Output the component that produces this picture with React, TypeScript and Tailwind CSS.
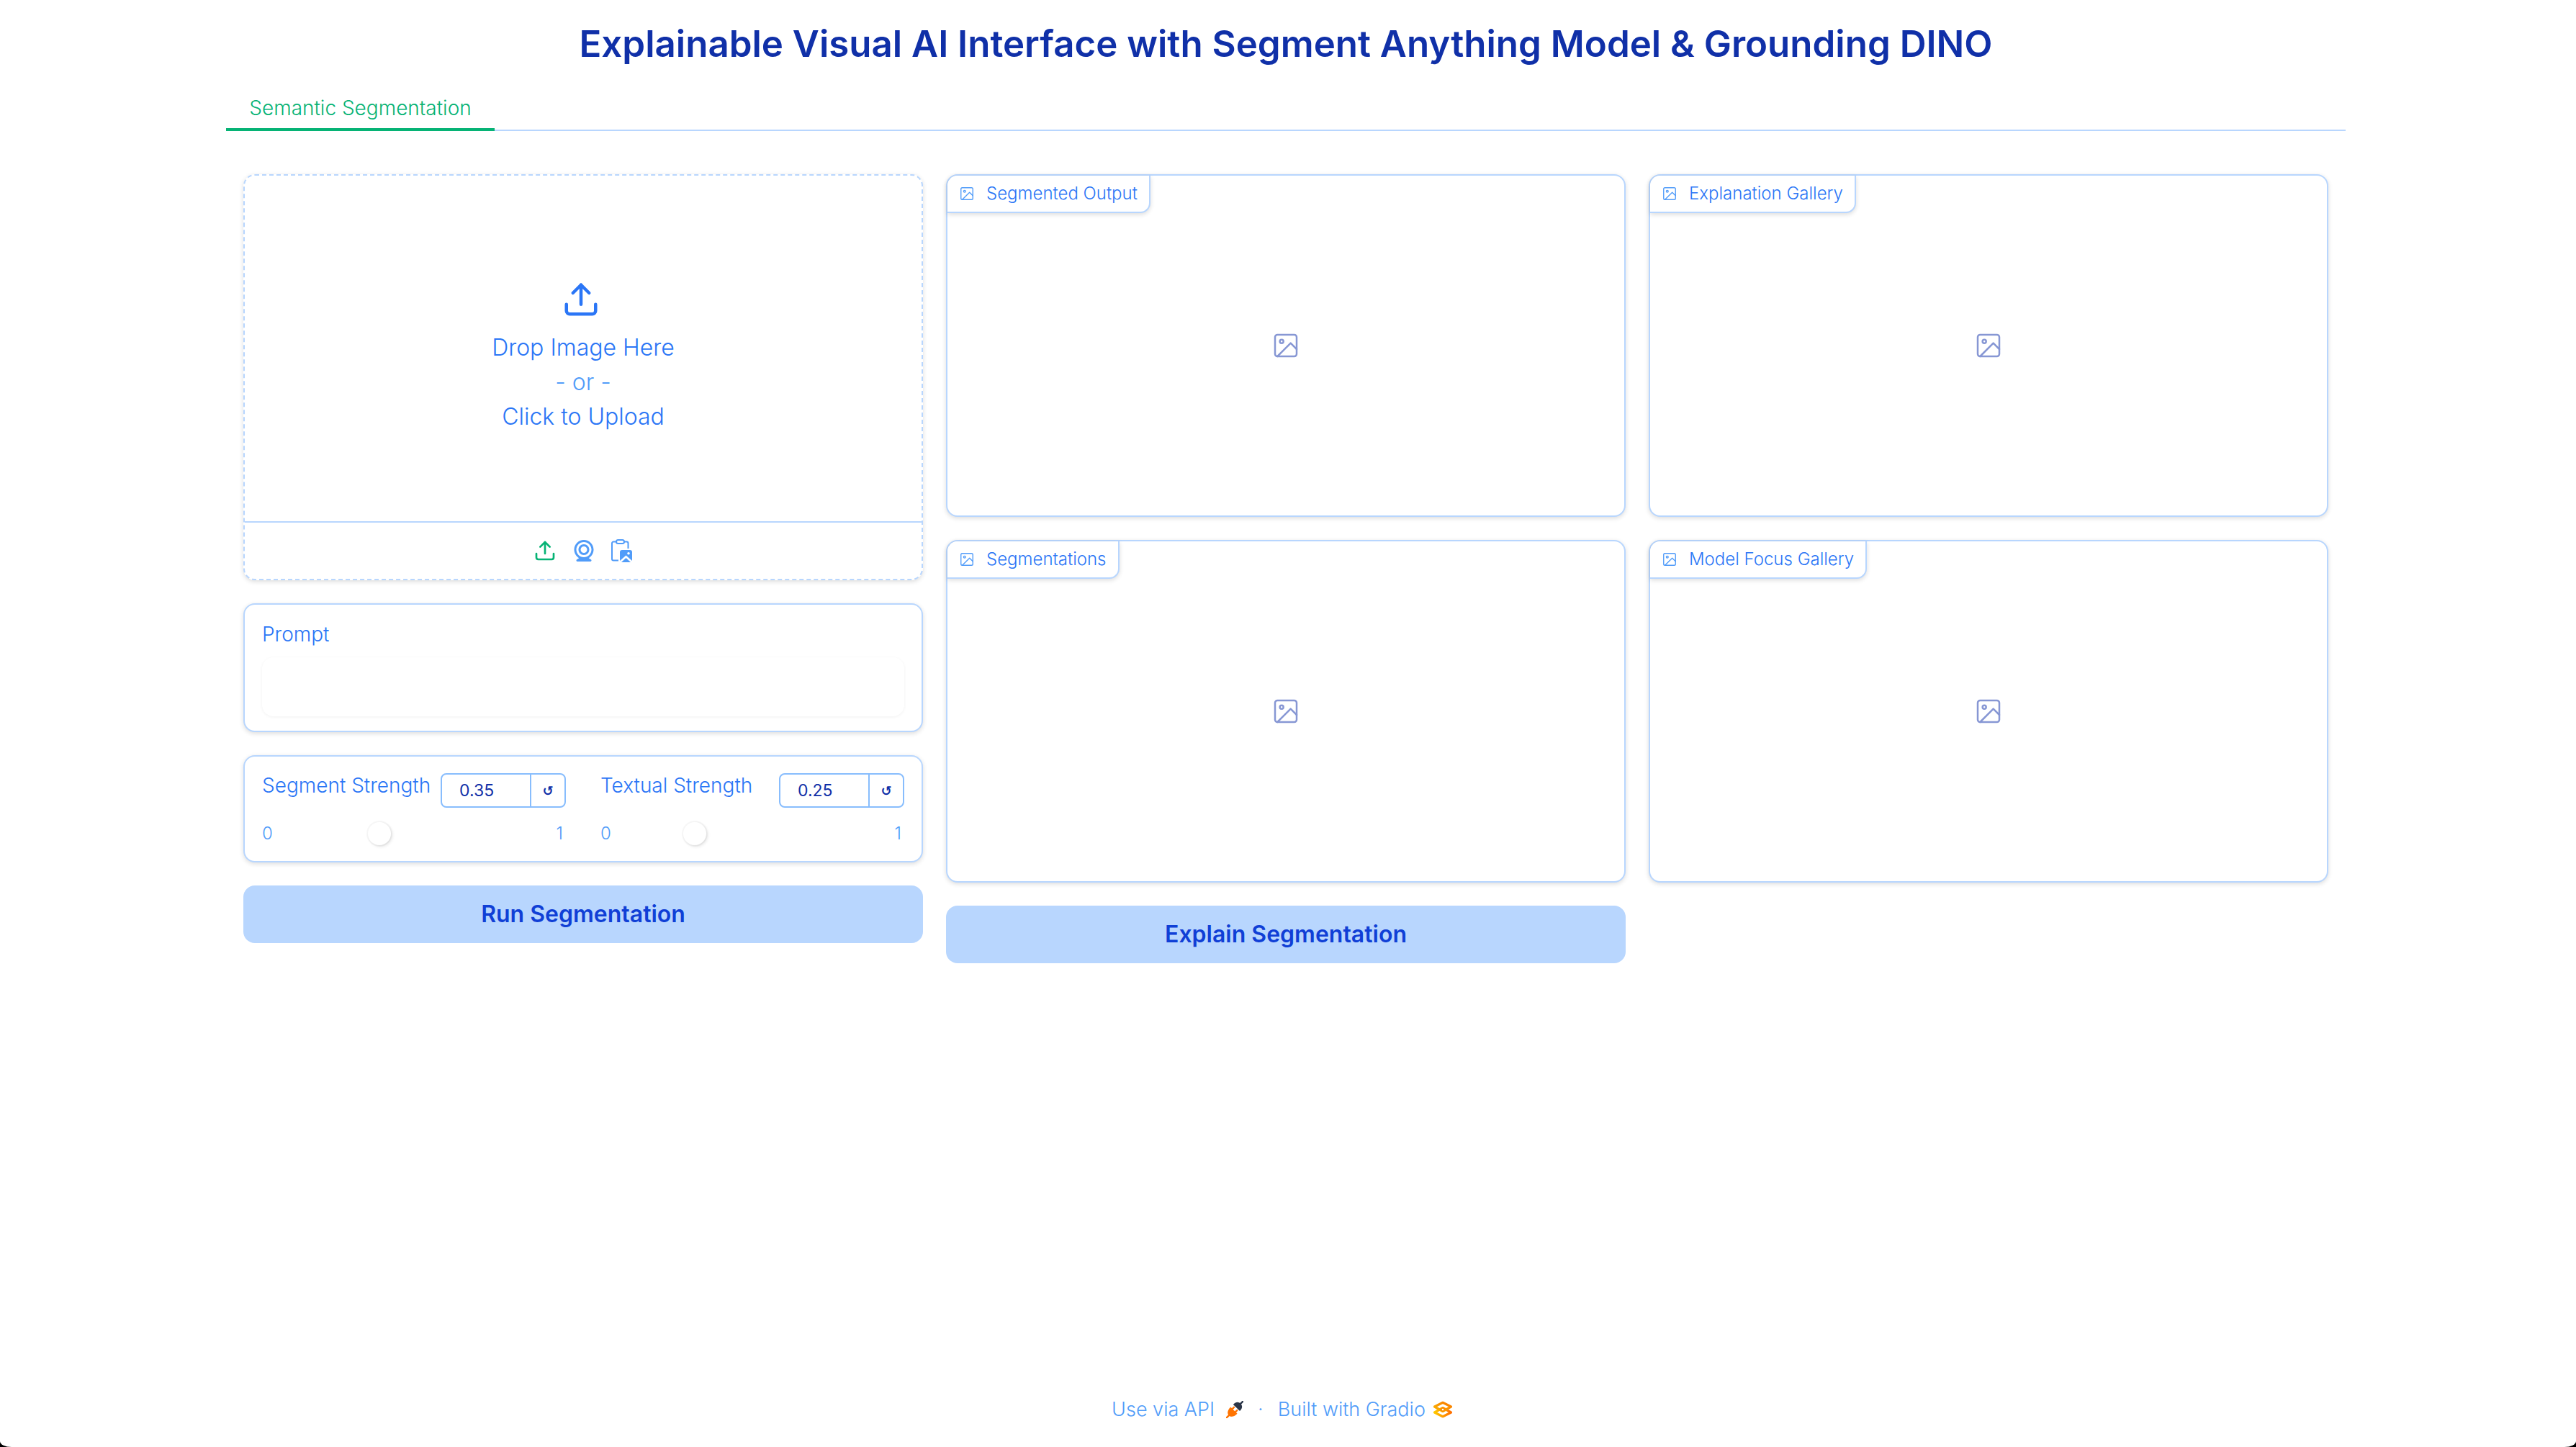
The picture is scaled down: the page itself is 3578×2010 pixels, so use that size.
import React from "react";

const CARD = "rounded-[16px] border-2 border-[#b8d6fe] bg-white shadow-[0_2px_6px_rgba(0,0,0,0.14)]";

function UploadIcon({ className }: { className: string }) {
  return (
    <svg className={className} viewBox="0 0 24 24" fill="none" stroke="currentColor" strokeWidth="2" strokeLinecap="round" strokeLinejoin="round" aria-hidden="true">
      <path d="M21 15v4a2 2 0 0 1-2 2H5a2 2 0 0 1-2-2v-4" />
      <polyline points="17 8 12 3 7 8" />
      <line x1="12" y1="3" x2="12" y2="15" />
    </svg>
  );
}

function WebcamIcon() {
  return (
    <svg className="size-9" viewBox="0 0 24 24" fill="currentColor" aria-hidden="true">
      <path d="M12 2c-4.963 0-9 4.038-9 9 0 3.328 1.82 6.232 4.513 7.79l-2.067 1.378A1 1 0 0 0 6 22h12a1 1 0 0 0 .555-1.832l-2.067-1.378C19.18 17.232 21 14.328 21 11c0-4.962-4.037-9-9-9zm0 16c-3.859 0-7-3.141-7-7s3.141-7 7-7 7 3.14 7 7-3.141 7-7 7z" />
      <path d="M12 6c-2.757 0-5 2.243-5 5s2.243 5 5 5 5-2.243 5-5-2.243-5-5-5zm0 8c-1.654 0-3-1.346-3-3s1.346-3 3-3 3 1.346 3 3-1.346 3-3 3z" />
    </svg>
  );
}

function PasteIcon() {
  return (
    <svg className="h-8 w-[30px]" viewBox="0 0 30 32" fill="none" stroke="currentColor" strokeWidth="2" strokeLinejoin="round" aria-hidden="true">
      <path d="M7 3.5H3a2 2 0 0 0-2 2v22a2 2 0 0 0 2 2h7M18 3.5h3.500a2 2 0 0 1 2 2V13" />
      <rect x="7" y="1" width="11" height="5" rx="2.5" />
      <path
        fill="currentColor"
        stroke="none"
        fillRule="evenodd"
        d="M15 15h11a3 3 0 0 1 3 3v12l-8.500-7.500L12 30V18a3 3 0 0 1 3-3zM24 18a1.800 1.800 0 1 0 0 3.600 1.800 1.800 0 0 0 0-3.600z"
      />
      <path fill="currentColor" stroke="none" d="M20.500 26l6.500 6H14z" />
    </svg>
  );
}

function PictureIcon({ className }: { className: string }) {
  return (
    <svg className={className} viewBox="0 0 24 24" fill="none" stroke="currentColor" strokeWidth="1.5" strokeLinecap="round" strokeLinejoin="round" aria-hidden="true">
      <rect x="3" y="3" width="18" height="18" rx="2" />
      <circle cx="8.500" cy="8.500" r="1.500" />
      <polyline points="21 15 16 10 5 21" />
    </svg>
  );
}

function PlugIcon() {
  return (
    <svg className="size-6" viewBox="0 0 24 24" aria-hidden="true">
      <g transform="rotate(45 12 12)">
        <g fill="#2b3648" stroke="#2b3648">
          <path stroke="none" d="M5.500 8.500h13C18.500 3 16 .5 12 .5S5.500 3 5.500 8.500z" />
          <path strokeWidth="2.400" strokeLinecap="round" d="M12 1v-5" />
        </g>
        <g fill="#ff7300" stroke="#ff7300">
          <path stroke="none" d="M5.500 13.500h13c0 7-3 10-6.500 10s-6.500-3-6.500-10z" />
          <path strokeWidth="2.400" strokeLinecap="round" d="M12 23v5M9 14v-3.500M15 14v-3.500" />
        </g>
      </g>
    </svg>
  );
}

function GradioIcon() {
  return (
    <svg className="h-6 w-7" viewBox="0 0 28 24" fill="none" strokeLinejoin="round" aria-hidden="true">
      <defs>
        <linearGradient id="gradio-top" x1="0" y1="1" x2="1" y2="0">
          <stop offset="0" stopColor="#fbb800" />
          <stop offset="1" stopColor="#f97700" />
        </linearGradient>
        <linearGradient id="gradio-bottom" x1="0" y1="0" x2="1" y2="0">
          <stop offset="0" stopColor="#ffc800" />
          <stop offset="1" stopColor="#ff7000" />
        </linearGradient>
      </defs>
      <path stroke="url(#gradio-bottom)" strokeWidth="3.200" d="M14 9.500L25.500 16 14 21.700 2.500 16z" />
      <path stroke="url(#gradio-top)" strokeWidth="3.200" d="M14 2.300L25.500 8 14 14.500 2.500 8z" />
      <path fill="#f98c00" d="M14 8.500l4.500 3.500-4.500 3.500L9.500 12z" />
      <circle cx="14" cy="12" r="1.300" fill="#fff" />
    </svg>
  );
}

function OutputPanel({ title }: { title: string }) {
  return (
    <section className={`${CARD} relative flex h-[476px] items-center justify-center`}>
      <h2 className="absolute top-0 left-0 flex h-[52px] items-center gap-4 rounded-tl-[14px] rounded-br-[14px] border-r-2 border-b-2 border-[#b8d6fe] bg-white px-4 text-[24px] font-light text-[#2b76f6] shadow-[0_2px_6px_rgba(0,0,0,0.14)]">
        <PictureIcon className="size-[22px] text-[#519cf9]" />
        {title}
      </h2>
      <PictureIcon className="size-10 text-[#8797d4]" />
    </section>
  );
}

function Strength({ id, label, initial }: { id: string; label: string; initial: number }) {
  const [value, setValue] = React.useState(initial);
  return (
    <div className="min-w-0 flex-1">
      <div className="flex h-12 items-start justify-between">
        <label htmlFor={id} className="text-[28px] leading-[34px] whitespace-nowrap text-[#2b76f6]">
          {label}
        </label>
        <div className="flex h-12 w-[174px] shrink-0 rounded-[8px] border-2 border-[#88bdfd] bg-white text-[#1030a8]">
          <input
            id={id}
            type="text"
            value={value}
            onChange={(e) => setValue(Number(e.target.value) || 0)}
            className="w-[122px] pl-6 text-[23px] font-normal outline-none"
          />
          <button type="button" aria-label={`Reset ${label}`} onClick={() => setValue(initial)} className="flex-1 border-l-2 border-[#88bdfd] font-['DejaVu_Sans',sans-serif] text-[18px] font-bold">
            ↺
          </button>
        </div>
      </div>
      <div className="mt-[18px] flex h-9 items-center text-[24px] text-[#519cf9]">
        <span className="w-[35px]">0</span>
        <input
          type="range"
          min="0"
          max="1"
          step="0.01"
          value={value}
          aria-label={`${label} slider`}
          onChange={(e) => setValue(Number(e.target.value))}
          className="h-9 min-w-0 flex-1 appearance-none bg-transparent [&::-webkit-slider-thumb]:size-8 [&::-webkit-slider-thumb]:appearance-none [&::-webkit-slider-thumb]:rounded-full [&::-webkit-slider-thumb]:bg-white [&::-webkit-slider-thumb]:shadow-[0_0_0_2px_rgba(0,0,0,0.03),2px_2px_4px_rgba(0,0,0,0.10)]"
        />
        <span className="w-[35px] pr-1 text-right">1</span>
      </div>
    </div>
  );
}

function ActionButton({ children }: { children: React.ReactNode }) {
  return (
    <button type="button" className="h-20 w-full rounded-[16px] bg-[#b8d6fe] text-[32px] font-semibold text-[#103fd6]">
      {children}
    </button>
  );
}

export default function App() {
  return (
    <div className="min-h-screen bg-black font-['Inter','DejaVu_Sans',sans-serif] font-light">
      <div className="flex min-h-screen flex-col bg-white pr-1.5 [border-radius:0_0_16px_16px/0_0_8px_8px]">
        <main className="mx-auto w-full max-w-[2944px] flex-1 pt-6">
          <h1 className="text-center text-[51px] leading-[73px] font-semibold text-[#1030a8]">
            Explainable Visual AI Interface with Segment Anything Model &amp; Grounding DINO
          </h1>
          <div role="tablist" className="mt-[21px] flex h-16 shadow-[inset_0_-2px_0_#b8d6fe]">
            <button type="button" role="tab" aria-selected="true" className="w-[373px] border-b-4 border-[#06b375] pt-1 text-[28px] text-[#06b375]">
              Semantic Segmentation
            </button>
          </div>

          <div className="grid grid-cols-3 items-start gap-8 px-6 pt-15">
            <div className="flex flex-col gap-8">
              <section className="flex h-[564px] flex-col rounded-[16px] border-2 border-dashed border-[#b8d6fe] bg-white shadow-[0_2px_6px_rgba(0,0,0,0.14)]">
                <button type="button" className="flex flex-1 flex-col items-center justify-center pt-6 text-[32px] leading-[48px] text-[#2b76f6]">
                  <span className="mb-4 block w-15">
                    <UploadIcon className="size-[54px]" />
                  </span>
                  <span>Drop Image Here</span>
                  <span className="text-[#519cf9]">- or -</span>
                  <span>Click to Upload</span>
                </button>
                <div className="flex h-20 items-center justify-center gap-5 border-t-2 border-[#b8d6fe] text-[#519cf9]">
                  <button type="button" aria-label="Upload file" className="text-[#06b375]">
                    <UploadIcon className="size-8" />
                  </button>
                  <button type="button" aria-label="Use webcam">
                    <WebcamIcon />
                  </button>
                  <button type="button" aria-label="Paste from clipboard">
                    <PasteIcon />
                  </button>
                </div>
              </section>

              <section className={`${CARD} flex h-[179px] flex-col px-6 pt-6`}>
                <label htmlFor="prompt" className="text-[28px] leading-[34px] text-[#2b76f6]">
                  Prompt
                </label>
                <textarea id="prompt" rows={1} className="mt-[15px] h-[82px] w-full resize-none rounded-[16px] px-5 py-4 text-[28px] text-[#1030a8] shadow-[0_1px_4px_rgba(0,0,0,0.06)] outline-none" />
              </section>

              <section className={`${CARD} flex h-[149px] gap-12 px-6 pt-[23px]`}>
                <Strength id="segment" label="Segment Strength" initial={0.35} />
                <Strength id="textual" label="Textual Strength" initial={0.25} />
              </section>

              <ActionButton>Run Segmentation</ActionButton>
            </div>

            <div className="flex flex-col gap-8">
              <OutputPanel title="Segmented Output" />
              <OutputPanel title="Segmentations" />
              <ActionButton>Explain Segmentation</ActionButton>
            </div>

            <div className="flex flex-col gap-8">
              <OutputPanel title="Explanation Gallery" />
              <OutputPanel title="Model Focus Gallery" />
            </div>
          </div>
        </main>

        <footer className="flex items-center justify-center pr-2.5 pb-8 text-[27px] leading-10 text-[#519cf9]">
          <a href="#api" className="flex items-center gap-4">
            Use via API
            <PlugIcon />
          </a>
          <span className="px-5">·</span>
          <a href="#gradio" className="flex items-center gap-2.5">
            Built with Gradio
            <GradioIcon />
          </a>
        </footer>
      </div>
    </div>
  );
}
